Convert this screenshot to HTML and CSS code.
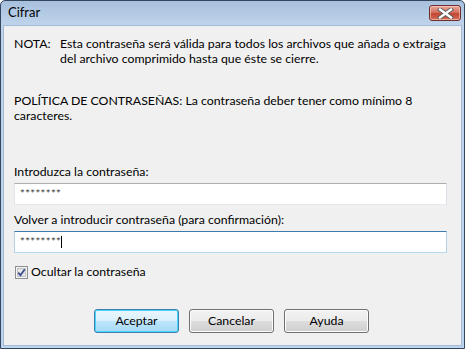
FILE: index.html
```html
<!DOCTYPE html>
<html lang="es">
<head>
<meta charset="utf-8">
<title>Cifrar</title>
<link rel="stylesheet" href="styles.css">
</head>
<body>
<div class="window">
  <div class="titlebar">
    <span class="title">Cifrar</span>
    <div class="close">
      <svg width="17" height="11" viewBox="0 0 17 11">
        <path d="M3 1.5 L14 9.5 M14 1.5 L3 9.5" stroke="#5a5a5a" stroke-width="4.2" stroke-linecap="square"/>
        <path d="M3 1.5 L14 9.5 M14 1.5 L3 9.5" stroke="#ffffff" stroke-width="2.4" stroke-linecap="square"/>
      </svg>
    </div>
  </div>
  <div class="client">
    <div class="note">
      <span class="note-label">NOTA:</span>
      <span class="note-text">Esta contraseña será válida para todos los archivos que añada o extraiga<br>del archivo comprimido hasta que éste se cierre.</span>
    </div>
    <p class="policy">POLÍTICA DE CONTRASEÑAS: La contraseña deber tener como mínimo 8<br>caracteres.</p>
    <label class="label first">Introduzca la contraseña:</label>
    <div class="field"><span class="pw">********</span></div>
    <label class="label">Volver a introducir contraseña (para confirmación):</label>
    <div class="field focused"><span class="pw">********</span><span class="caret"></span></div>
    <div class="check-row">
      <span class="checkbox">
        <svg width="13" height="13" viewBox="0 0 13 13">
          <rect x="0.5" y="0.5" width="12" height="12" fill="#f4f4f4" stroke="#8e8f8f"/>
          <rect x="2.5" y="2.5" width="8" height="8" fill="#e6e6e6" stroke="#c2c4c8"/>
          <path d="M3.2 6.6 L5.4 9.2 L9.8 3.2" fill="none" stroke="#3c4f8c" stroke-width="1.8"/>
        </svg>
      </span>
      <span class="check-label">Ocultar la contraseña</span>
    </div>
    <div class="buttons">
      <button class="btn default">Aceptar</button>
      <button class="btn">Cancelar</button>
      <button class="btn">Ayuda</button>
    </div>
  </div>
</div>
</body>
</html>
```

FILE: styles.css
```css
* { box-sizing: border-box; }
html, body {
  margin: 0;
  padding: 0;
  width: 465px;
  height: 349px;
  overflow: hidden;
  background: #ffffff;
}
body {
  font-family: Lato, "Noto Sans", "DejaVu Sans", sans-serif;
  font-size: 12.3px;
  color: #000;
}
.window {
  width: 465px;
  height: 349px;
  border: 1px solid #34465e;
  border-radius: 5px 5px 0 0;
  background: linear-gradient(#a7c0dd 0px, #bfd4eb 24px, #bcd4ee 100%);
  padding: 0 2px 2px 2px;
  display: flex;
  flex-direction: column;
}
.titlebar {
  height: 24px;
  flex: none;
  display: flex;
  align-items: flex-start;
  justify-content: space-between;
}
.title {
  margin-left: 5px;
  margin-top: 4px;
  line-height: 15px;
  font-size: 13px;
  color: #000;
}
.close {
  margin-top: 4px;
  margin-right: 1px;
  width: 32px;
  height: 16px;
  border: 1px solid #6b2e2a;
  border-radius: 3px;
  background: linear-gradient(#e9a99b 0%, #d3705f 45%, #c24530 55%, #d4705a 100%);
  box-shadow: inset 0 0 0 1px rgba(255,220,210,0.55);
  display: flex;
  align-items: center;
  justify-content: center;
}
.close svg { display: block; }
.client {
  flex: 1;
  background: #f0f0f0;
  border: 1px solid #a3bbd6;
  padding: 10px 13px 0 10px;
  display: flex;
  flex-direction: column;
}
.note {
  display: flex;
  line-height: 15px;
}
.note-label {
  width: 46px;
  flex: none;
}
.note-text {
  white-space: nowrap;
}
.policy {
  margin: 27px 0 0 0;
  line-height: 15px;
  white-space: nowrap;
}
.label {
  display: block;
  line-height: 15px;
  margin-top: 7px;
}
.label.first { margin-top: 41px; }
.field {
  margin-top: 4px;
  height: 22px;
  width: 433px;
  background: #fff;
  border: 1px solid;
  border-color: #abadb3 #dbdfe6 #e3e9ef #e2e3ea;
  display: flex;
  align-items: center;
  padding-left: 5px;
}
.field.focused {
  border-color: #3d7bad #b5cfe7 #b7d9ed #b5cfe7;
}
.pw {
  font-family: "DejaVu Sans Mono", monospace;
  font-size: 7.9px;
  letter-spacing: 0.4px;
  line-height: 10px;
  margin-top: -2px;
  color: #222;
}
.caret {
  width: 1px;
  height: 12px;
  background: #000;
  margin-left: 0px;
}
.check-row {
  margin-top: 11px;
  display: flex;
  align-items: center;
  height: 15px;
  line-height: 15px;
}
.checkbox {
  width: 13px;
  height: 13px;
  margin-left: 1px;
  margin-top: 1px;
}
.checkbox svg { display: block; }
.check-label {
  margin-left: 3px;
}
.buttons {
  margin-top: 30px;
  display: flex;
  gap: 10px;
  padding-left: 80px;
}
.btn {
  width: 85px;
  height: 24px;
  font-family: inherit;
  font-size: 12.3px;
  color: #000;
  border: 1px solid #707070;
  border-radius: 3px;
  background: linear-gradient(#f2f2f2 0%, #ebebeb 50%, #dddddd 50%, #cfcfcf 100%);
  box-shadow: inset 0 0 0 1px #fcfcfc;
  padding: 0;
  line-height: 20px;
}
.btn.default {
  border-color: #3c7fb1;
  background: linear-gradient(#eaf6fd 0%, #d9f0fc 50%, #bee6fd 50%, #a7d9f5 100%);
  box-shadow: inset 0 0 0 1px #48d7fb;
}
```
